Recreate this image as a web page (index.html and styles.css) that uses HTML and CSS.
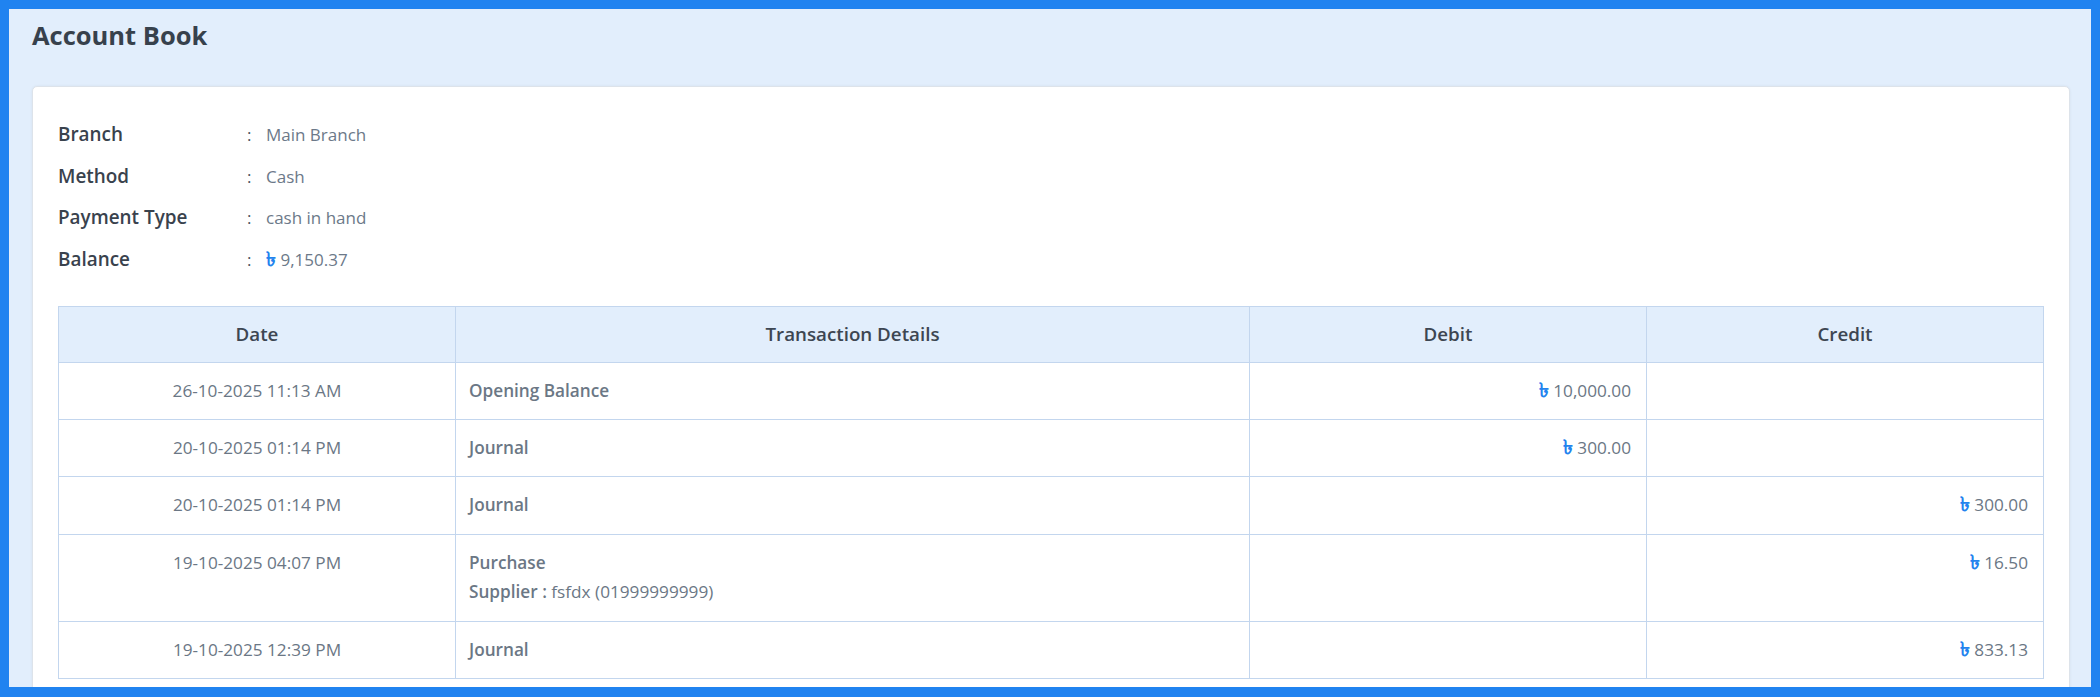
FILE: index.html
```html
<!DOCTYPE html>
<html lang="en">
<head>
<meta charset="utf-8">
<title>Account Book</title>
<link rel="stylesheet" href="styles.css">
</head>
<body>
<div class="frame">
  <h1 class="page-title">Account Book</h1>
  <div class="card">
    <div class="info">
      <div class="info-row"><span class="info-label">Branch</span><span class="info-colon">:</span><span class="info-value">Main Branch</span></div>
      <div class="info-row"><span class="info-label">Method</span><span class="info-colon">:</span><span class="info-value">Cash</span></div>
      <div class="info-row"><span class="info-label">Payment Type</span><span class="info-colon">:</span><span class="info-value">cash in hand</span></div>
      <div class="info-row"><span class="info-label">Balance</span><span class="info-colon">:</span><span class="info-value"><span class="tk">৳</span> 9,150.37</span></div>
    </div>
    <table class="ledger">
      <colgroup>
        <col class="c-date"><col class="c-details"><col class="c-amt"><col class="c-amt">
      </colgroup>
      <thead>
        <tr><th>Date</th><th>Transaction Details</th><th>Debit</th><th>Credit</th></tr>
      </thead>
      <tbody>
        <tr>
          <td class="date">26-10-2025 11:13 AM</td>
          <td class="details"><strong>Opening Balance</strong></td>
          <td class="amt"><span class="tk">৳</span> 10,000.00</td>
          <td class="amt"></td>
        </tr>
        <tr>
          <td class="date">20-10-2025 01:14 PM</td>
          <td class="details"><strong>Journal</strong></td>
          <td class="amt"><span class="tk">৳</span> 300.00</td>
          <td class="amt"></td>
        </tr>
        <tr>
          <td class="date">20-10-2025 01:14 PM</td>
          <td class="details"><strong>Journal</strong></td>
          <td class="amt"></td>
          <td class="amt"><span class="tk">৳</span> 300.00</td>
        </tr>
        <tr>
          <td class="date">19-10-2025 04:07 PM</td>
          <td class="details"><strong>Purchase</strong><div class="sub"><strong>Supplier :</strong> fsfdx (01999999999)</div></td>
          <td class="amt"></td>
          <td class="amt"><span class="tk">৳</span> 16.50</td>
        </tr>
        <tr>
          <td class="date">19-10-2025 12:39 PM</td>
          <td class="details"><strong>Journal</strong></td>
          <td class="amt"></td>
          <td class="amt"><span class="tk">৳</span> 833.13</td>
        </tr>
      </tbody>
    </table>
  </div>
</div>
</body>
</html>
```
FILE: styles.css
```css
* { box-sizing: border-box; }
html, body { margin: 0; padding: 0; }
body {
  font-family: "Open Sans", "Noto Sans", "DejaVu Sans", sans-serif;
  background: #2083f0;
}
.frame {
  height: 697px;
  overflow: hidden;
  background: #e2eefc;
  border-style: solid;
  border-color: #2083f0;
  border-width: 9px 9px 10px 9px;
  padding: 11px 21px 0 23px;
}
.page-title {
  margin: 0 0 35px 0;
  font-size: 25.5px;
  line-height: 1.2;
  font-weight: 700;
  color: #37414c;
}
.card {
  background: #fff;
  border: 1px solid #dde3ea;
  border-radius: 5px;
  box-shadow: 0 0 3px rgba(0, 0, 0, 0.06);
  padding: 27.3px 25px 25px 25px;
}
.info { margin-bottom: 25.3px; }
.info-row {
  display: flex;
  align-items: baseline;
  height: 41.67px;
  line-height: 41.67px;
  overflow: hidden;
}
.info-label {
  width: 189px;
  font-size: 18.9px;
  font-weight: 600;
  color: #39424d;
}
.info-colon {
  width: 19px;
  font-size: 17px;
  color: #4a5360;
}
.info-value {
  font-size: 17px;
  color: #6c7989;
}
.tk {
  color: #2383ee;
  font-size: 1.15em;
  font-weight: 700;
  line-height: 1;
}
.ledger {
  width: 100%;
  border-collapse: collapse;
  table-layout: fixed;
  border: 1px solid #c3d6ee;
}
.c-date { width: 20%; }
.c-details { width: 40%; }
.c-amt { width: 20%; }
.ledger th {
  background: #e2eefc;
  border: 1px solid #c3d6ee;
  padding: 13.5px 15px;
  font-size: 18.75px;
  line-height: 28px;
  font-weight: 600;
  color: #3d4652;
  text-align: center;
}
.ledger td {
  border: 1px solid #c3d6ee;
  padding: 15px;
  font-size: 17.2px;
  line-height: 26.25px;
  color: #6b7785;
  vertical-align: top;
  text-align: left;
}
.ledger td strong { font-weight: 600; }
.ledger td.details { padding-left: 13px; }
.ledger td.date { text-align: center; }
.ledger td.amt { text-align: right; }
.sub { margin-top: 3.5px; }
```
